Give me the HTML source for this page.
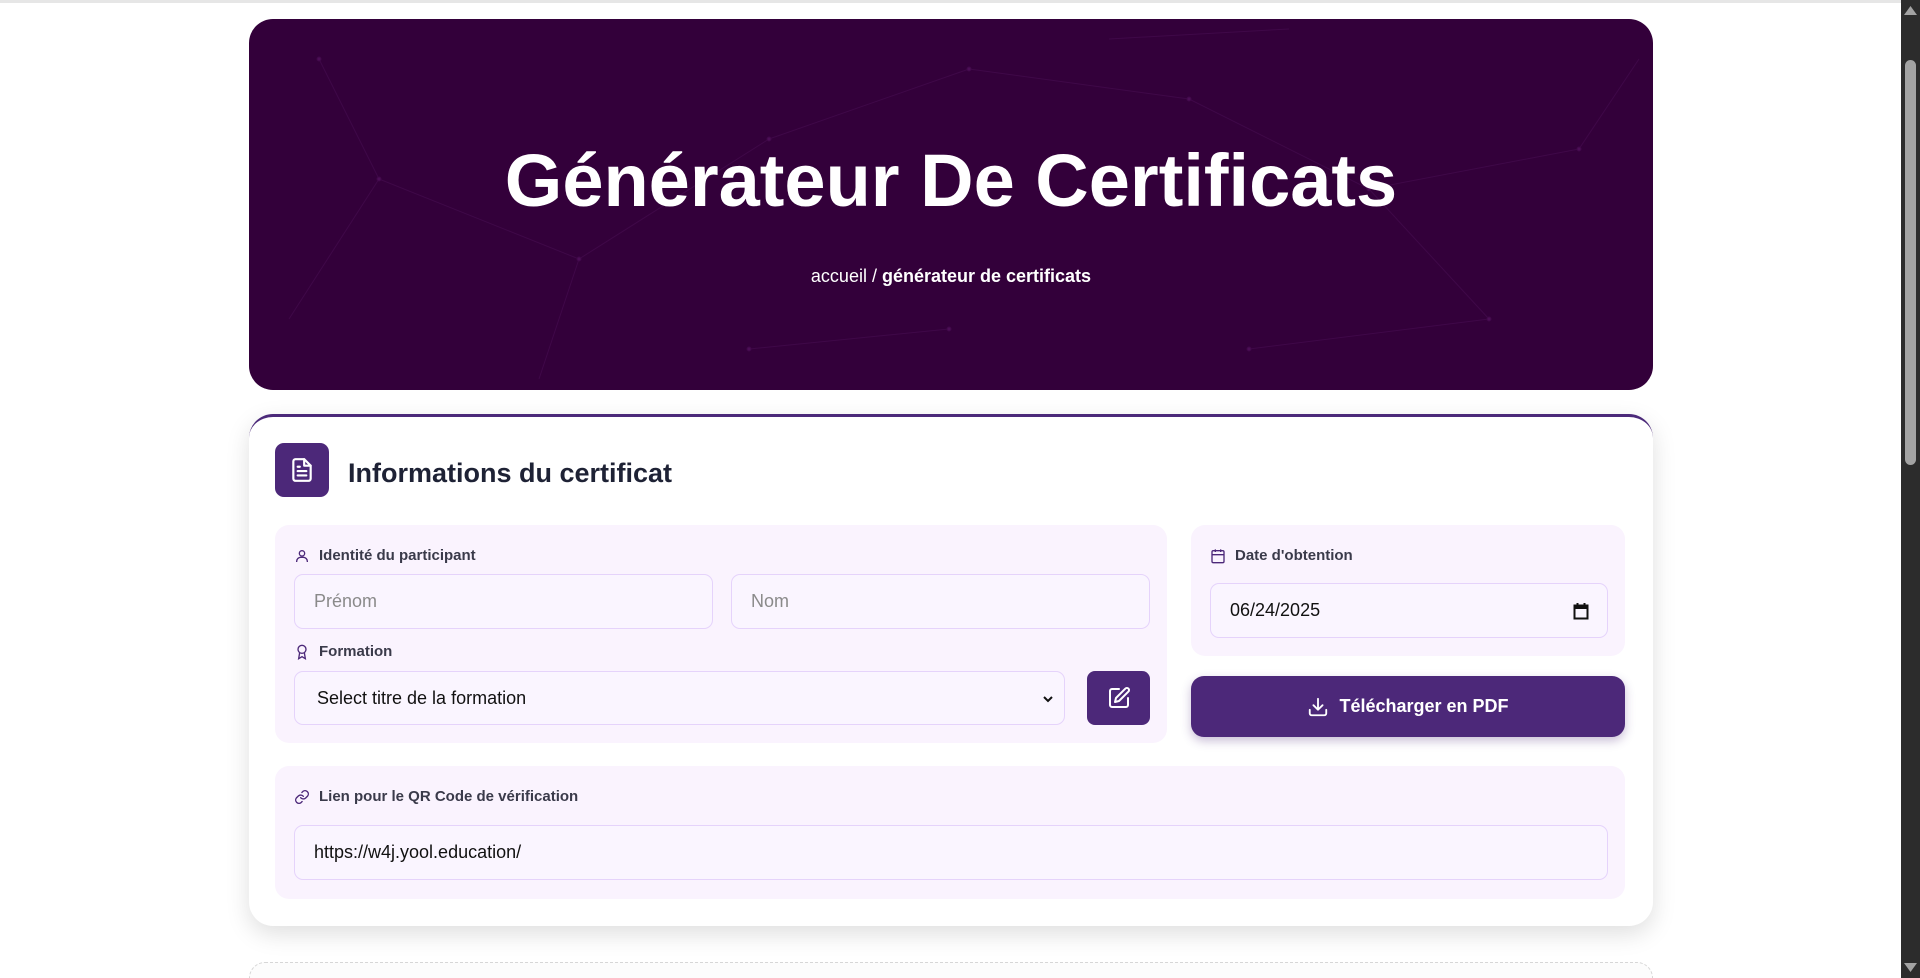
<!DOCTYPE html>
<html><head><meta charset="utf-8"><style>
*{box-sizing:border-box;margin:0;padding:0}
html,body{width:1920px;height:978px;overflow:hidden;background:#fff;font-family:"Liberation Sans",sans-serif;position:relative}
.topline{position:absolute;left:0;top:0;width:1901px;height:3px;background:#e6e6e6}
.sb{position:absolute;left:1901px;top:0;width:19px;height:978px;background:#2c2c2c}
.thumb{position:absolute;left:4px;top:60px;width:11px;height:405px;background:#a3a3a3;border-radius:6px}
.hero{position:absolute;left:249px;top:19px;width:1404px;height:371px;background:#33003a;border-radius:24px;overflow:hidden}
.hero h1{position:absolute;left:0;right:0;top:122px;text-align:center;color:#fff;font-size:74px;font-weight:700;line-height:80px}
.bc{position:absolute;left:0;right:0;top:247px;text-align:center;color:#fff;font-size:18px}
.bc b{font-weight:700}
.card{position:absolute;left:249px;top:414px;width:1404px;height:512px;background:#fff;border-top:3px solid #4c2a7a;border-radius:24px;box-shadow:0 8px 24px rgba(0,0,0,.13)}
.ic{position:absolute;left:26px;top:26px;width:54px;height:54px;background:#4c2879;border-radius:9px;display:flex;align-items:center;justify-content:center}
.h2{position:absolute;left:99px;top:41px;font-size:27px;font-weight:700;color:#1e2235}
.panel{position:absolute;background:#faf3fe;border-radius:14px}
.lab{position:absolute;font-size:15px;font-weight:700;color:#3a3a4a;display:flex;align-items:center;gap:9px}
.inp{position:absolute;border:1px solid #e5d3fb;background:#faf5ff;border-radius:9px;font-size:18px;display:flex;align-items:center;padding-left:19px;color:#111}
.ph{color:#8a8a8a}
.btnE{position:absolute;background:#4c2879;border-radius:8px;display:flex;align-items:center;justify-content:center}
.dl{position:absolute;left:942px;top:259px;width:434px;height:61px;background:#4c2879;border-radius:13px;color:#fff;font-size:18px;font-weight:700;display:flex;align-items:center;justify-content:center;gap:10px;box-shadow:0 4px 10px rgba(76,40,121,.3)}
.dash{position:absolute;left:249px;top:962px;width:1404px;height:16px;border:1px dashed #d6d6d6;border-bottom:none;border-radius:22px 22px 0 0;background:#fcfcfc}
</style></head><body>
<div class="topline"></div>
<div class="hero">
<svg width="1404" height="371" style="position:absolute;left:0;top:0" stroke="#3f0848" stroke-width="1" fill="#4c0e57">
<line x1="70" y1="40" x2="130" y2="160"/><line x1="130" y1="160" x2="40" y2="300"/><line x1="130" y1="160" x2="330" y2="240"/><line x1="330" y1="240" x2="520" y2="120"/><line x1="520" y1="120" x2="720" y2="50"/><line x1="720" y1="50" x2="940" y2="80"/><line x1="940" y1="80" x2="1120" y2="170"/><line x1="1120" y1="170" x2="1330" y2="130"/><line x1="1330" y1="130" x2="1390" y2="40"/><line x1="330" y1="240" x2="290" y2="360"/><line x1="1120" y1="170" x2="1240" y2="300"/><line x1="1240" y1="300" x2="1000" y2="330"/><line x1="500" y1="330" x2="700" y2="310"/><line x1="860" y1="20" x2="1040" y2="10"/>
<circle cx="70" cy="40" r="2"/><circle cx="130" cy="160" r="2"/><circle cx="330" cy="240" r="2"/><circle cx="520" cy="120" r="2"/><circle cx="720" cy="50" r="2"/><circle cx="940" cy="80" r="2"/><circle cx="1120" cy="170" r="2"/><circle cx="1330" cy="130" r="2"/><circle cx="1240" cy="300" r="2"/><circle cx="1000" cy="330" r="2"/><circle cx="500" cy="330" r="2"/><circle cx="700" cy="310" r="2"/>
</svg>
<h1>Générateur De Certificats</h1>
<div class="bc">accueil / <b>générateur de certificats</b></div>
</div>
<div class="card">
<div class="ic"><svg width="26" height="26" viewBox="0 0 24 24" fill="none" stroke="#fff" stroke-width="2" stroke-linecap="round" stroke-linejoin="round"><path d="M14 2H6a2 2 0 0 0-2 2v16a2 2 0 0 0 2 2h12a2 2 0 0 0 2-2V8z"/><path d="M14 2v6h6"/><path d="M8 13h8M8 17h8M8 9h2"/></svg></div>
<div class="h2">Informations du certificat</div>
<div class="panel" style="left:26px;top:108px;width:892px;height:218px">
<div class="lab" style="left:19px;top:22px"><svg width="16" height="16" viewBox="0 0 24 24" fill="none" stroke="#4c2879" stroke-width="2"><circle cx="12" cy="8" r="4"/><path d="M4 21v-1a6 6 0 0 1 6-6h4a6 6 0 0 1 6 6v1"/></svg>Identité du participant</div>
<div class="inp" style="left:19px;top:49px;width:419px;height:55px"><span class="ph">Prénom</span></div>
<div class="inp" style="left:456px;top:49px;width:419px;height:55px"><span class="ph">Nom</span></div>
<div class="lab" style="left:19px;top:118px"><svg width="16" height="16" viewBox="0 0 24 24" fill="none" stroke="#4c2879" stroke-width="2"><circle cx="12" cy="8" r="6"/><path d="M15.5 13 17 22l-5-3-5 3 1.5-9"/></svg>Formation</div>
<div class="inp" style="left:19px;top:146px;width:771px;height:54px;padding-left:22px">Select titre de la formation<svg style="position:absolute;right:10px;top:22px" width="12" height="10" viewBox="0 0 12 10"><path d="M2 3l4 4 4-4" stroke="#111" stroke-width="2" fill="none"/></svg></div>
<div class="btnE" style="left:812px;top:146px;width:63px;height:54px"><svg width="24" height="24" viewBox="0 0 24 24" fill="none" stroke="#fff" stroke-width="2" stroke-linecap="round" stroke-linejoin="round"><path d="M12 3H5a2 2 0 0 0-2 2v14a2 2 0 0 0 2 2h14a2 2 0 0 0 2-2v-7"/><path d="M18.4 2.6a2.1 2.1 0 0 1 3 3L12 15l-4 1 1-4z"/></svg></div>
</div>
<div class="panel" style="left:942px;top:108px;width:434px;height:131px">
<div class="lab" style="left:19px;top:22px"><svg width="16" height="16" viewBox="0 0 24 24" fill="none" stroke="#4c2879" stroke-width="2"><rect x="3" y="4" width="18" height="18" rx="2"/><path d="M16 2v4M8 2v4M3 10h18"/></svg>Date d'obtention</div>
<div class="inp" style="left:19px;top:58px;width:398px;height:55px">06/24/2025<svg style="position:absolute;right:18px;top:18px" width="16" height="18" viewBox="0 0 16 18"><rect x="1.5" y="3.5" width="13" height="13" fill="none" stroke="#111" stroke-width="2"/><rect x="1" y="3" width="14" height="4" fill="#111"/><path d="M4.5 1v3M11.5 1v3" stroke="#111" stroke-width="2"/></svg></div>
</div>
<div class="dl"><svg width="22" height="22" viewBox="0 0 24 24" fill="none" stroke="#fff" stroke-width="2" stroke-linecap="round" stroke-linejoin="round"><path d="M21 15v4a2 2 0 0 1-2 2H5a2 2 0 0 1-2-2v-4"/><path d="M7 10l5 5 5-5M12 15V3"/></svg>Télécharger en PDF</div>
<div class="panel" style="left:26px;top:349px;width:1350px;height:133px">
<div class="lab" style="left:19px;top:22px"><svg width="16" height="16" viewBox="0 0 24 24" fill="none" stroke="#4c2879" stroke-width="2" stroke-linecap="round"><path d="M10 13a5 5 0 0 0 7.5.5l3-3a5 5 0 0 0-7-7l-1.7 1.7"/><path d="M14 11a5 5 0 0 0-7.5-.5l-3 3a5 5 0 0 0 7 7l1.7-1.7"/></svg>Lien pour le QR Code de vérification</div>
<div class="inp" style="left:19px;top:59px;width:1314px;height:55px">https://w4j.yool.education/</div>
</div>
</div>
<div class="dash"></div>
<div class="sb"><svg style="position:absolute;left:3px;top:6px" width="13" height="9"><path d="M6.5 0 13 9H0z" fill="#a3a3a3"/></svg><div class="thumb"></div><svg style="position:absolute;left:3px;top:963px" width="13" height="9"><path d="M0 0h13L6.5 9z" fill="#a3a3a3"/></svg></div>
</body></html>
